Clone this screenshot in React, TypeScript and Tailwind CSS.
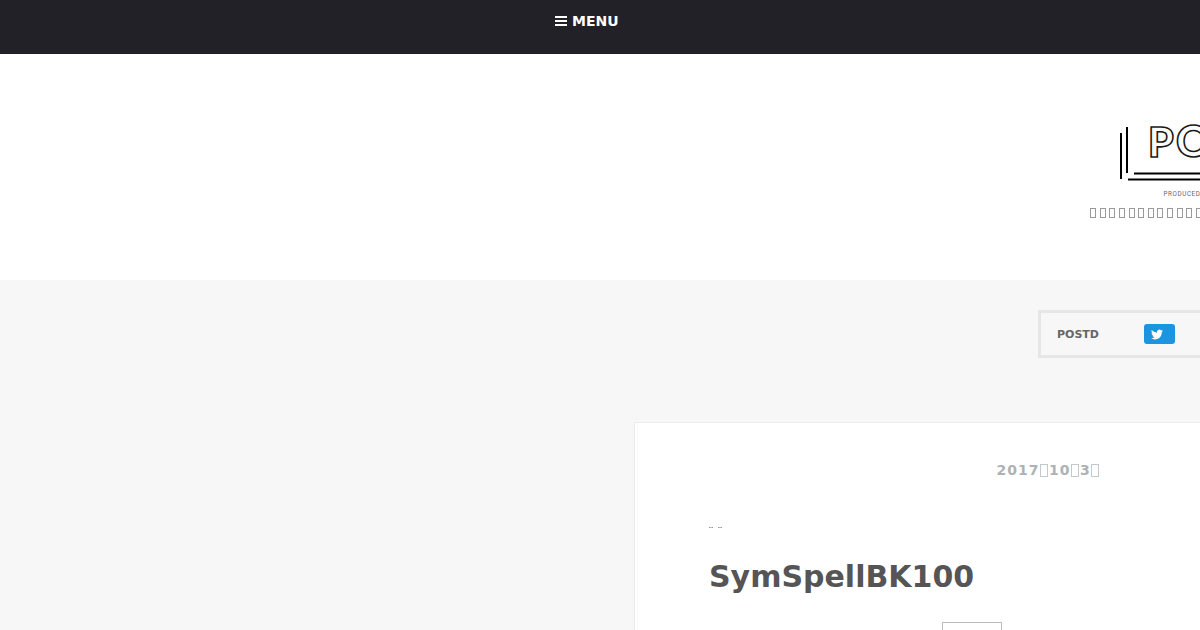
const tagline = Array.from({ length: 12 }, (_, i) => i)

function DateBox() {
  return <span className="mr-[1.2px] ml-[0.3px] inline-block h-[13px] w-[8px] border border-[#c3c8cb] align-[-2px]" />
}

function MenuBar() {
  return (
    <header className="flex h-[54px] items-start bg-[#222127] pt-[11px] pl-[555px] text-white">
      <button className="flex h-5 items-center gap-[5px] text-[14px] leading-5 font-bold">
        <span className="flex w-3 flex-col gap-[2px]">
          <span className="h-[2px] bg-white" />
          <span className="h-[2px] bg-white" />
          <span className="h-[2px] bg-white" />
        </span>
        MENU
      </button>
    </header>
  )
}

function Logo() {
  return (
    <svg width="120" height="80" viewBox="0 0 120 80" className="block">
      <g fill="none" stroke="#000" strokeWidth="2">
        <path d="M11 13V59M17 7V53M24 53.4H120M18 59.4H120" />
      </g>
      <text
        x="38"
        y="36.6"
        fontFamily="Lato"
        fontWeight="900"
        fontSize="41"
        fill="#fff"
        stroke="#1a1a1a"
        strokeWidth="1.6"
      >
        P
        <tspan x="66" y="37" fontSize="43">
          O
        </tspan>
      </text>
      <text x="53.5" y="75.8" fontFamily="Roboto" fontSize="6.3" letterSpacing="0.6" fill="#666">
        PRODUCED
      </text>
    </svg>
  )
}

function SiteHeader() {
  return (
    <div className="h-[226px] bg-white pt-[66px] pl-[1089px]">
      <div className="ml-[21px]">
        <Logo />
      </div>
      <div className="mt-[8px] ml-[1px] flex gap-[3.65px]">
        {tagline.map((i) => (
          <span key={i} className="h-[10px] w-[6px] shrink-0 border border-[#9a9a9a]" />
        ))}
      </div>
    </div>
  )
}

function ShareBox() {
  return (
    <div className="ml-[1038px] flex h-[48px] w-[400px] items-center border-[3px] border-[#e6e6e6] pl-4">
      <span className="w-[87px] pt-[2px] text-[11px] font-bold text-[#666]">POSTD</span>
      <a className="flex h-5 w-[31px] items-center rounded-[3px] bg-[#1b95e0] pl-[7px]">
        <svg width="12" height="13" viewBox="0 0 24 24" fill="#fff">
          <path d="M23.95 4.57a10 10 0 0 1-2.82.77 4.96 4.96 0 0 0 2.16-2.72c-.95.55-2 .96-3.13 1.18a4.92 4.92 0 0 0-8.38 4.48C7.69 8.1 4.07 6.13 1.64 3.16a4.82 4.82 0 0 0-.67 2.48c0 1.71.87 3.21 2.19 4.1a4.9 4.9 0 0 1-2.23-.62v.06a4.92 4.92 0 0 0 3.95 4.83 5 5 0 0 1-2.21.08 4.94 4.94 0 0 0 4.6 3.42A9.87 9.87 0 0 1 0 19.54a13.99 13.99 0 0 0 7.55 2.21c9.05 0 14-7.5 14-13.98l-.02-.64a9.94 9.94 0 0 0 2.42-2.56z" />
        </svg>
      </a>
    </div>
  )
}

function Article() {
  return (
    <article className="mt-[64px] ml-[634px] h-[400px] w-[900px] border-t border-l border-[#ededed] bg-white pl-[2px]">
      <div className="h-full border-l border-[#f9f9f9] pl-[71px]">
        <time className="ml-[287.5px] block h-[57px] pt-[37px] text-[14px] leading-[20px] font-bold tracking-[1px] text-[#acb2b5]">
          2017
          <DateBox />
          10
          <DateBox />3
          <DateBox />
        </time>
        <div className="mt-[47px] flex h-px gap-[5px]">
          <span className="w-1 border-x border-[#999] bg-[#bbb]" />
          <span className="w-1 border-x border-[#999] bg-[#bbb]" />
        </div>
        <h1 className="mt-[29px] text-[30px] leading-[40px] font-bold text-[#555]">SymSpellBK100</h1>
        <div className="mt-[25px] ml-[233px] h-[60px] w-[60px] border border-[#bbb]" />
      </div>
    </article>
  )
}

export default function App() {
  return (
    <main className="h-[630px] w-[1200px] overflow-hidden bg-[#f7f7f7] font-['DejaVu_Sans',sans-serif]">
      <MenuBar />
      <SiteHeader />
      <div className="pt-[30px]">
        <ShareBox />
        <Article />
      </div>
    </main>
  )
}
